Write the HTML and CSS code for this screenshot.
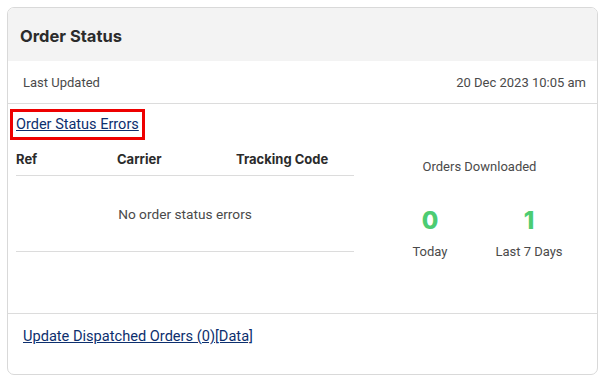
FILE: index.html
```html
<!DOCTYPE html>
<html>
<head>
    <title>Order Status</title>
    <link rel="stylesheet" href="styles.css">
</head>
<body>
    <div class="card">
        <div class="card-header">
            <h2>Order Status</h2>
        </div>
        <div class="updated">
            <span>Last Updated</span>
            <span>20 Dec 2023 10:05 am</span>
        </div>
        <div class="card-body">
            <div class="errors">
                <a href="#" class="errors-link">Order Status Errors</a>
                <table class="errors-table">
                    <thead>
                        <tr>
                            <th class="col-ref">Ref</th>
                            <th class="col-carrier">Carrier</th>
                            <th>Tracking Code</th>
                        </tr>
                    </thead>
                    <tbody>
                        <tr>
                            <td colspan="3" class="empty">No order status errors</td>
                        </tr>
                    </tbody>
                </table>
            </div>
            <div class="downloads">
                <div class="downloads-title">Orders Downloaded</div>
                <div class="stats">
                    <div class="stat">
                        <div class="stat-value">0</div>
                        <div class="stat-label">Today</div>
                    </div>
                    <div class="stat">
                        <div class="stat-value">1</div>
                        <div class="stat-label">Last 7 Days</div>
                    </div>
                </div>
            </div>
        </div>
        <div class="card-footer">
            <a href="#" class="footer-link">Update Dispatched Orders (0)[Data]</a>
        </div>
    </div>
</body>
</html>
```

FILE: styles.css
```css
body {
    margin: 0;
    padding: 7px 9px 0 7px;
    font-family: Roboto, "Liberation Sans", sans-serif;
    font-size: 13px;
    color: #4a4a4a;
    background-color: #fff;
}
.card {
    border: 1px solid #d9d9d9;
    border-radius: 7px;
    overflow: hidden;
    height: 366px;
    display: flex;
    flex-direction: column;
}
.card-header {
    background-color: #f3f3f3;
    height: 53px;
    display: flex;
    align-items: center;
    padding: 0 12px;
}
.card-header h2 {
    margin: 0;
    font-family: Inter, sans-serif;
    font-size: 16.5px;
    font-weight: 700;
    color: #2b2b2b;
    padding-top: 2px;
}
.updated {
    display: flex;
    justify-content: space-between;
    align-items: center;
    height: 42px;
    padding: 0 11px 0 15px;
    border-bottom: 1px solid #dcdcdc;
}
.card-body {
    display: flex;
    height: 209px;
    border-bottom: 1px solid #dcdcdc;
}
.errors {
    width: 338px;
    padding: 8px 0 0 8px;
}
.errors-link {
    display: inline-block;
    margin-left: -3px;
    padding: 4px 3px;
    line-height: 17px;
    font-size: 14.5px;
    color: #0d2f6e;
    outline: 3px solid #ee0000;
}
.errors-table {
    width: 100%;
    border-collapse: collapse;
    margin-top: 14px;
}
.errors-table th {
    text-align: left;
    font-family: Inter, sans-serif;
    font-size: 13px;
    font-weight: 700;
    line-height: 16px;
    color: #2b2b2b;
    padding: 0 0 8px 0;
    border-bottom: 1px solid #dcdcdc;
}
.col-ref {
    width: 101px;
}
.col-carrier {
    width: 119px;
}
.errors-table .empty {
    text-align: center;
    font-size: 13.7px;
    height: 75px;
    padding: 0;
    border-bottom: 1px solid #dcdcdc;
}
.downloads {
    flex: 1;
    padding: 54px 0 0 8px;
    text-align: center;
}
.downloads-title {
    line-height: 18px;
}
.stats {
    display: flex;
    justify-content: center;
    margin-top: 30px;
}
.stat {
    width: 99px;
}
.stat-value {
    font-family: Inter, sans-serif;
    font-size: 24px;
    font-weight: 800;
    color: #4ccc72;
    line-height: 30px;
}
.stat-label {
    margin-top: 7px;
    line-height: 18px;
}
.card-footer {
    flex: 1;
    padding: 13px 15px;
}
.footer-link {
    display: inline-block;
    line-height: 18px;
    font-size: 14.6px;
    color: #0d2f6e;
}
```
